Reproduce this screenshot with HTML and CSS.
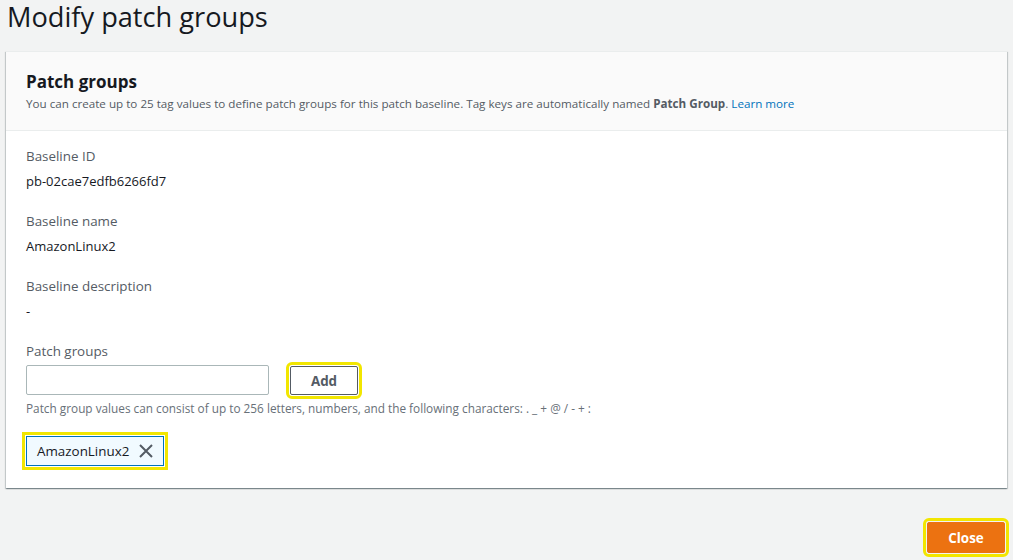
FILE: index.html
```html
<!DOCTYPE html>
<html lang="en">
<head>
<meta charset="utf-8">
<title>Modify patch groups</title>
<link rel="stylesheet" href="styles.css">
</head>
<body>
<div class="page">
  <h1 class="title">Modify patch groups</h1>
  <section class="panel">
    <header class="panel-header">
      <h2 class="panel-title">Patch groups</h2>
      <p class="panel-desc">You can create up to 25 tag values to define patch groups for this patch baseline. Tag keys are automatically named <b>Patch Group</b>. <a href="#" class="link">Learn more</a></p>
    </header>
    <div class="panel-body">
      <div class="field">
        <div class="label">Baseline ID</div>
        <div class="value">pb-02cae7edfb6266fd7</div>
      </div>
      <div class="field">
        <div class="label">Baseline name</div>
        <div class="value">AmazonLinux2</div>
      </div>
      <div class="field">
        <div class="label">Baseline description</div>
        <div class="value">-</div>
      </div>
      <div class="field">
        <div class="label">Patch groups</div>
        <div class="input-row">
          <input class="text-input" type="text" aria-label="Patch groups">
          <button class="btn btn-normal focus">Add</button>
        </div>
        <div class="hint">Patch group values can consist of up to 256 letters, numbers, and the following characters: . _ + @ / - + :</div>
        <div class="tokens">
          <div class="token focus">
            <span class="token-text">AmazonLinux2</span>
            <svg class="token-x" width="16" height="16" viewBox="0 0 16 16" aria-hidden="true"><path d="M2 2 L14 14 M14 2 L2 14" fill="none" stroke="#545b64" stroke-width="2"/></svg>
          </div>
        </div>
      </div>
    </div>
  </section>
  <div class="actions">
    <button class="btn btn-primary focus">Close</button>
  </div>
</div>
</body>
</html>
```

FILE: styles.css
```css
html, body {
  margin: 0;
  padding: 0;
  background: #f2f3f3;
  font-family: "Open Sans", "Noto Sans", Arial, sans-serif;
  color: #16191f;
}
.page {
  padding: 0 6px 0 6px;
}
.title {
  margin: 0;
  padding: 0 0 0 1px;
  font-size: 27.2px;
  font-weight: 400;
  line-height: 33px;
  height: 51px;
  color: #16191f;
}
.panel {
  background: #fff;
  border-top: 1px solid #eaeded;
  box-shadow: 0 1px 1px 0 rgba(0, 28, 36, 0.3), 1px 1px 1px 0 rgba(0, 28, 36, 0.15), -1px 1px 1px 0 rgba(0, 28, 36, 0.15);
}
.panel-header {
  background: #fafafa;
  border-bottom: 1px solid #eaeded;
  padding: 19px 20px 18px 20px;
}
.panel-title {
  margin: 0;
  font-size: 17px;
  font-weight: 700;
  line-height: 22px;
  color: #16191f;
}
.panel-desc {
  margin: 3px 0 0 0;
  font-size: 11.65px;
  line-height: 16px;
  color: #545b64;
}
.panel-desc b {
  font-weight: 700;
  color: #545b64;
}
.link {
  color: #0073bb;
  text-decoration: none;
}
.panel-body {
  padding: 14px 20px 22px 20px;
}
.field {
  margin-bottom: 18px;
}
.field:last-child {
  margin-bottom: 0;
}
.label {
  font-size: 13.4px;
  line-height: 22px;
  color: #545b64;
  margin-bottom: 3px;
}
.value {
  font-size: 13px;
  line-height: 22px;
  color: #16191f;
}
.input-row {
  display: flex;
  align-items: flex-start;
  gap: 21px;
  margin-top: 2px;
}
.text-input {
  box-sizing: border-box;
  width: 243px;
  height: 30px;
  margin: 0;
  border: 1px solid #aab7b8;
  border-radius: 2px;
  background: #fff;
  font: inherit;
  font-size: 13px;
  padding: 4px 10px;
}
.btn {
  box-sizing: border-box;
  font-family: inherit;
  font-weight: 700;
  font-size: 13.4px;
  border-radius: 2px;
  cursor: pointer;
  margin: 0;
}
.btn-normal {
  width: 68px;
  height: 29px;
  margin-top: 1px;
  background: #fff;
  color: #545b64;
  border: 1px solid #545b64;
  padding: 0;
}
.btn-primary {
  width: 78px;
  height: 31px;
  background: #ec7211;
  color: #fff;
  border: 1px solid #ec7211;
  padding: 0;
}
.focus {
  outline: 3px solid #f2e600;
  outline-offset: 1px;
}
.hint {
  margin-top: 5px;
  font-size: 11.8px;
  line-height: 16px;
  color: #687078;
}
.tokens {
  display: flex;
  margin-top: 20px;
}
.token {
  box-sizing: border-box;
  display: flex;
  align-items: center;
  gap: 9px;
  height: 30px;
  padding: 0 9px 0 10px;
  background: #f1faff;
  border: 1px solid #0073bb;
  border-radius: 0;
  font-size: 13.4px;
  color: #16191f;
}
.token-x {
  display: block;
}
.actions {
  display: flex;
  justify-content: flex-end;
  padding: 34px 2px 7px 0;
}
```
